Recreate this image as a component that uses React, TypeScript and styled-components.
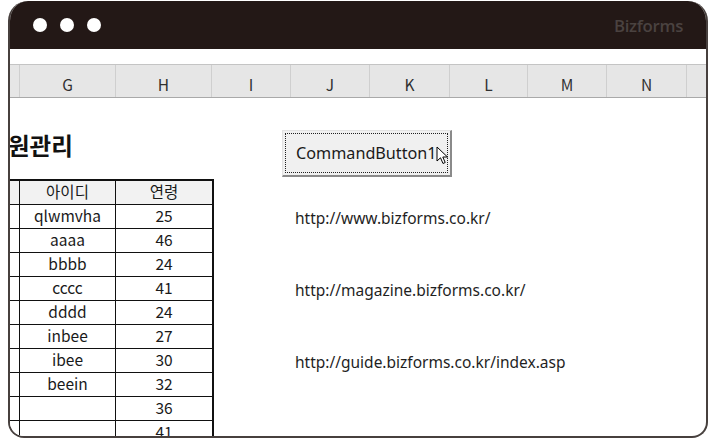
import { createGlobalStyle } from 'styled-components';
import styled from 'styled-components';

const GlobalStyle = createGlobalStyle`
  html, body {
    margin: 0;
    padding: 0;
    background: #ffffff;
  }
  body {
    font-family: "Noto Sans", "Noto Sans CJK KR", sans-serif;
  }
`;

const Page = styled.div`
  width: 715px;
  height: 440px;
  padding: 1px 0 0 8px;
  box-sizing: border-box;
  overflow: hidden;
`;

const Window = styled.div`
  width: 700px;
  height: 437px;
  box-sizing: border-box;
  border: 2px solid #47403e;
  border-top: none;
  border-radius: 20px 20px 16px 16px;
  overflow: hidden;
  display: flex;
  flex-direction: column;
  background: #ffffff;
`;

const TitleBar = styled.div`
  height: 48px;
  flex: none;
  margin: 0 -2px;
  background: #231816;
  display: flex;
  align-items: center;
  padding: 0 25px 0 25px;
`;

const Dot = styled.span`
  width: 14px;
  height: 14px;
  border-radius: 50%;
  background: #ffffff;
  margin-right: 13px;
`;

const Brand = styled.span`
  margin-left: auto;
  color: #4a4240;
  font-family: "Open Sans", "Noto Sans", sans-serif;
  font-weight: 600;
  font-size: 16.8px;
  letter-spacing: -0.3px;
`;

const FormulaStrip = styled.div`
  height: 15px;
  flex: none;
  border-bottom: 1px solid #c4c4c4;
`;

const ColumnHeader = styled.div`
  height: 32px;
  flex: none;
  display: grid;
  grid-template-columns: 10px 96px 96px 79px 79px 80px 78px 79px 80px 1fr;
  background: #e6e6e6;
  border-bottom: 1px solid #a9a9a9;
`;

const ColumnCell = styled.div`
  display: flex;
  align-items: center;
  justify-content: center;
  border-right: 1px solid #cfcfcf;
  padding-top: 6px;
  color: #303030;
  font-family: "Noto Sans CJK KR", sans-serif;
  font-size: 15.5px;
  &:last-child {
    border-right: none;
  }
`;

const Sheet = styled.div`
  flex: 1;
  display: flex;
  overflow: hidden;
`;

const LeftBlock = styled.div`
  width: 204px;
  display: flex;
  flex-direction: column;
  padding-top: 30px;
`;

const SheetTitle = styled.h1`
  margin: 0 0 0 -2px;
  height: 35px;
  line-height: 34px;
  font-family: "Noto Sans CJK KR", sans-serif;
  font-weight: 700;
  font-size: 23.5px;
  color: #111111;
`;

const Table = styled.div`
  margin-top: 17px;
  border-top: 2px solid #111111;
  border-right: 2px solid #111111;
`;

const Row = styled.div<{ $head?: boolean }>`
  display: grid;
  grid-template-columns: 10px 96px 96px;
  height: 24px;
  background: ${(p) => (p.$head ? '#f2f2f2' : '#ffffff')};
  border-bottom: 1px solid #111111;
  box-sizing: border-box;
`;

const Cell = styled.div`
  display: flex;
  align-items: center;
  justify-content: center;
  border-right: 1px solid #111111;
  font-family: "Noto Sans CJK KR", sans-serif;
  font-size: 15.5px;
  color: #1a1a1a;
  line-height: 1;
  padding-bottom: 1px;
  &:last-child {
    border-right: none;
  }
`;

const RightBlock = styled.div`
  margin-left: 68px;
  padding-top: 32px;
  display: flex;
  flex-direction: column;
`;

const CommandButton = styled.div`
  position: relative;
  width: 170px;
  height: 47px;
  box-sizing: border-box;
  background: #f0f0f0;
  border-top: 1px solid #e3e3e3;
  border-left: 1px solid #e3e3e3;
  border-right: 2px solid #8a8a8a;
  border-bottom: 2px solid #8a8a8a;
  padding: 2px;
`;

const FocusRing = styled.div`
  height: 100%;
  box-sizing: border-box;
  border: 1px dotted #202020;
  display: flex;
  align-items: center;
  padding-left: 10px;
  font-family: "Noto Sans", sans-serif;
  font-size: 16.2px;
  color: #1a1a1a;
`;

const Cursor = styled.svg`
  position: absolute;
  left: 153px;
  top: 15px;
`;

const Link = styled.div<{ $gap: number }>`
  margin-top: ${(p) => p.$gap}px;
  padding-left: 13px;
  height: 22px;
  line-height: 22px;
  font-family: "Noto Sans", sans-serif;
  font-size: 15.5px;
  color: #1f1f1f;
`;

const columns = ['', 'G', 'H', 'I', 'J', 'K', 'L', 'M', 'N', ''];

const members: [string, string][] = [
  ['qlwmvha', '25'],
  ['aaaa', '46'],
  ['bbbb', '24'],
  ['cccc', '41'],
  ['dddd', '24'],
  ['inbee', '27'],
  ['ibee', '30'],
  ['beein', '32'],
  ['', '36'],
  ['', '41'],
];

export default function App() {
  return (
    <Page>
      <GlobalStyle />
      <Window>
        <TitleBar>
          <Dot />
          <Dot />
          <Dot />
          <Brand>Bizforms</Brand>
        </TitleBar>
        <FormulaStrip />
        <ColumnHeader>
          {columns.map((c, i) => (
            <ColumnCell key={i}>{c}</ColumnCell>
          ))}
        </ColumnHeader>
        <Sheet>
          <LeftBlock>
            <SheetTitle>원관리</SheetTitle>
            <Table>
              <Row $head>
                <Cell />
                <Cell>아이디</Cell>
                <Cell>연령</Cell>
              </Row>
              {members.map(([id, age], i) => (
                <Row key={i}>
                  <Cell />
                  <Cell>{id}</Cell>
                  <Cell>{age}</Cell>
                </Row>
              ))}
            </Table>
          </LeftBlock>
          <RightBlock>
            <CommandButton>
              <FocusRing>CommandButton1</FocusRing>
              <Cursor width="13" height="19" viewBox="0 0 13 19">
                <path
                  d="M1 1 L1 15 L4.5 11.8 L7 17.5 L9.2 16.5 L6.8 11 L11.5 11 Z"
                  fill="#ffffff"
                  stroke="#000000"
                  strokeWidth="1"
                  strokeLinejoin="miter"
                />
              </Cursor>
            </CommandButton>
            <Link $gap={30}>http://www.bizforms.co.kr/</Link>
            <Link $gap={50}>http://magazine.bizforms.co.kr/</Link>
            <Link $gap={50}>http://guide.bizforms.co.kr/index.asp</Link>
          </RightBlock>
        </Sheet>
      </Window>
    </Page>
  );
}
